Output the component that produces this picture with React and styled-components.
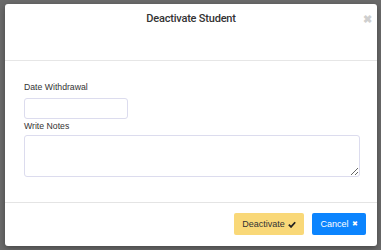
import React from 'react'
import styled, { createGlobalStyle } from 'styled-components'

const Global = createGlobalStyle`
  html, body {
    margin: 0;
    padding: 0;
    background: #6b6b6b;
    font-family: 'Liberation Sans', Arial, sans-serif;
  }
`

const Backdrop = styled.div`
  padding: 4px 4px 4px 5px;
  height: 250px;
  box-sizing: border-box;
  background: #6b6b6b;
`

const Modal = styled.div`
  width: 372px;
  height: 242px;
  background: #fff;
  border-radius: 3px;
  box-shadow: 0 2px 6px rgba(0, 0, 0, 0.35);
  display: flex;
  flex-direction: column;
  overflow: hidden;
`

const Header = styled.div`
  position: relative;
  height: 57px;
  box-sizing: border-box;
  padding-top: 7px;
  text-align: center;
  border-bottom: 1px solid #e6e6e6;
`

const Title = styled.h4`
  margin: 0;
  font-family: Roboto, sans-serif;
  font-size: 11px;
  font-weight: 500;
  letter-spacing: -0.2px;
  color: #333;
  line-height: 16px;
`

const Close = styled.span`
  position: absolute;
  right: 5px;
  top: 7px;
  font-size: 11px;
  font-weight: bold;
  color: #cfcfcf;
  line-height: 16px;
`

const Body = styled.div`
  flex: 1;
  padding: 20px 18px 0 19px;
  display: flex;
  flex-direction: column;
`

const Label = styled.label`
  font-size: 8.7px;
  color: #333;
  line-height: 12px;
  margin-bottom: ${p => p.$gap}px;
`

const Input = styled.input`
  width: 104px;
  height: 21px;
  box-sizing: border-box;
  border: 1px solid #dcdcee;
  border-radius: 3px;
  margin-bottom: 1px;
`

const TextArea = styled.textarea`
  width: 336px;
  height: 42px;
  box-sizing: border-box;
  border: 1px solid #dcdcee;
  border-radius: 3px;
  resize: both;
  font-family: inherit;
`

const Footer = styled.div`
  border-top: 1px solid #e4e4e4;
  height: 44px;
  box-sizing: border-box;
  padding: 10px 11px 0 0;
  display: flex;
  justify-content: flex-end;
  align-items: flex-start;
  gap: 8px;
`

const Button = styled.button`
  height: 22px;
  width: ${p => p.$w}px;
  padding: 0;
  border: none;
  border-radius: 2px;
  font-family: 'Liberation Sans', Arial, sans-serif;
  font-size: 9px;
  background: ${p => p.$bg};
  color: ${p => p.$fg};
  display: flex;
  justify-content: center;
  align-items: center;
  gap: 3px;
`

export default function App() {
  return (
    <>
      <Global />
      <Backdrop>
        <Modal>
          <Header>
            <Title>Deactivate Student</Title>
            <Close>✖</Close>
          </Header>
          <Body>
            <Label $gap={5}>Date Withdrawal</Label>
            <Input />
            <Label $gap={3}>Write Notes</Label>
            <TextArea />
          </Body>
          <Footer>
            <Button $bg="#f9d878" $fg="#333" $w={70}>
              Deactivate
              <svg width="8" height="7" viewBox="0 0 10 8">
                <path d="M1 4.2 L3.8 7 L9 1.2" stroke="#222" strokeWidth="2.2" fill="none" />
              </svg>
            </Button>
            <Button $bg="#0b84fe" $fg="#fff" $w={54}>
              Cancel
              <span style={{ fontSize: 7 }}>✖</span>
            </Button>
          </Footer>
        </Modal>
      </Backdrop>
    </>
  )
}
